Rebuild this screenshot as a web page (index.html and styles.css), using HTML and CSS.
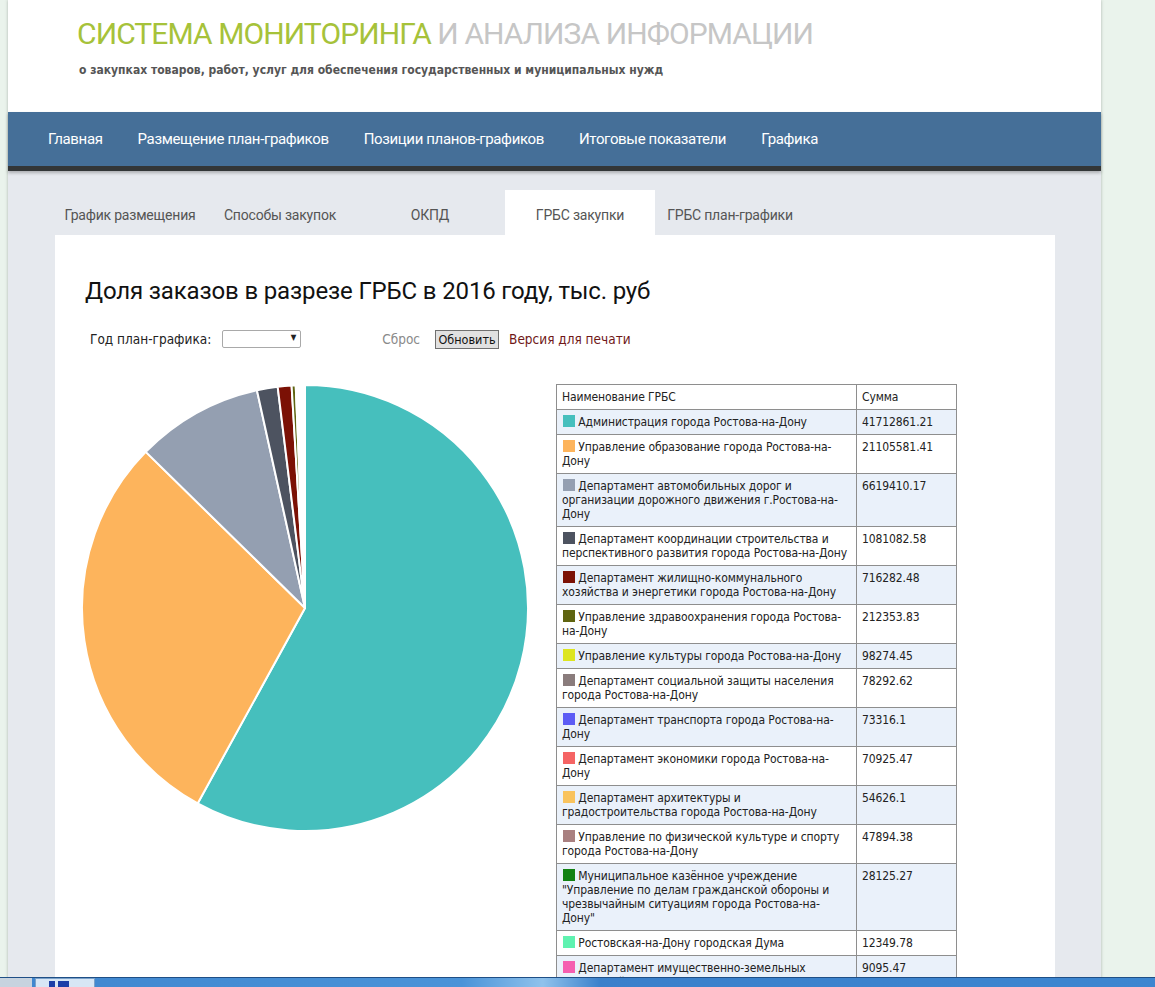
FILE: index.html
```html
<!DOCTYPE html>
<html lang="ru">
<head>
<meta charset="utf-8">
<title>Система мониторинга и анализа информации</title>
<link rel="stylesheet" href="styles.css">
</head>
<body>
<div class="page">
  <header class="site-header">
    <h1 class="brand"><span class="brand-accent">СИСТЕМА МОНИТОРИНГА</span> И АНАЛИЗА ИНФОРМАЦИИ</h1>
    <p class="brand-sub">о закупках товаров, работ, услуг для обеспечения государственных и муниципальных нужд</p>
  </header>
  <nav class="main-nav">
    <a href="#">Главная</a>
    <a href="#">Размещение план-графиков</a>
    <a href="#">Позиции планов-графиков</a>
    <a href="#">Итоговые показатели</a>
    <a href="#">Графика</a>
  </nav>
  <section class="content">
    <ul class="tabs">
      <li>График размещения</li>
      <li>Способы закупок</li>
      <li>ОКПД</li>
      <li class="active">ГРБС закупки</li>
      <li>ГРБС план-графики</li>
    </ul>
    <div class="panel">
      <h2 class="panel-title">Доля заказов в разрезе ГРБС в 2016 году, тыс. руб</h2>
      <div class="filters">
        <span class="filter-label">Год план-графика:</span>
        <span class="select"><span class="select-arrow">▼</span></span>
        <a class="reset" href="#">Сброс</a>
        <button class="btn" type="button">Обновить</button>
        <a class="print" href="#">Версия для печати</a>
      </div>
      <div class="chart-row">
        <svg class="pie" width="448" height="448" viewBox="0 0 448 448">
          <g stroke="#fff" stroke-width="2" stroke-linejoin="round">
            <path fill="#46bfbd" d="M224 224 L224 1 A223 223 0 1 1 116.65 419.46 Z"/>
            <path fill="#fdb45c" d="M224 224 L116.65 419.46 A223 223 0 0 1 64.75 67.9 Z"/>
            <path fill="#949fb1" d="M224 224 L64.75 67.9 A223 223 0 0 1 175.92 6.24 Z"/>
            <path fill="#4d5360" d="M224 224 L175.92 6.24 A223 223 0 0 1 196.66 2.67 Z"/>
            <path fill="#7b1105" d="M224 224 L196.66 2.67 A223 223 0 0 1 210.58 1.4 Z"/>
            <path fill="#5f6410" d="M224 224 L210.58 1.4 A223 223 0 0 1 214.7 1.19 Z"/>
            <path fill="#dde51f" d="M224 224 L214.7 1.19 A223 223 0 0 1 216.61 1.12 Z"/>
            <path fill="#8a7c7c" d="M224 224 L216.61 1.12 A223 223 0 0 1 218.12 1.08 Z"/>
            <path fill="#5c5cf5" d="M224 224 L218.12 1.08 A223 223 0 0 1 219.56 1.04 Z"/>
            <path fill="#f56464" d="M224 224 L219.56 1.04 A223 223 0 0 1 220.93 1.02 Z"/>
            <path fill="#f9c35d" d="M224 224 L220.93 1.02 A223 223 0 0 1 222.02 1.01 Z"/>
            <path fill="#a98080" d="M224 224 L222.02 1.01 A223 223 0 0 1 222.95 1 Z"/>
            <path fill="#128212" d="M224 224 L222.95 1 A223 223 0 0 1 223.49 1 Z"/>
            <path fill="#5ff2b0" d="M224 224 L223.49 1 A223 223 0 0 1 223.73 1 Z"/>
            <path fill="#f55eb0" d="M224 224 L223.73 1 A223 223 0 0 1 224 1 Z"/>
          </g>
        </svg>
        <table class="grbs">
          <thead>
            <tr><th class="col-name">Наименование ГРБС</th><th class="col-sum">Сумма</th></tr>
          </thead>
          <tbody>
            <tr><td><span class="sw c1"></span> Администрация города Ростова-на-Дону</td><td>41712861.21</td></tr>
            <tr><td><span class="sw c2"></span> Управление образование города Ростова-на-Дону</td><td>21105581.41</td></tr>
            <tr><td><span class="sw c3"></span> Департамент автомобильных дорог и организации дорожного движения г.Ростова-на-Дону</td><td>6619410.17</td></tr>
            <tr><td><span class="sw c4"></span> Департамент координации строительства и перспективного развития города Ростова-на-Дону</td><td>1081082.58</td></tr>
            <tr><td><span class="sw c5"></span> Департамент жилищно-коммунального хозяйства и энергетики города Ростова-на-Дону</td><td>716282.48</td></tr>
            <tr><td><span class="sw c6"></span> Управление здравоохранения города Ростова-на-Дону</td><td>212353.83</td></tr>
            <tr><td><span class="sw c7"></span> Управление культуры города Ростова-на-Дону</td><td>98274.45</td></tr>
            <tr><td><span class="sw c8"></span> Департамент социальной защиты населения города Ростова-на-Дону</td><td>78292.62</td></tr>
            <tr><td><span class="sw c9"></span> Департамент транспорта города Ростова-на-Дону</td><td>73316.1</td></tr>
            <tr><td><span class="sw c10"></span> Департамент экономики города Ростова-на-Дону</td><td>70925.47</td></tr>
            <tr><td><span class="sw c11"></span> Департамент архитектуры и градостроительства города Ростова-на-Дону</td><td>54626.1</td></tr>
            <tr><td><span class="sw c12"></span> Управление по физической культуре и спорту города Ростова-на-Дону</td><td>47894.38</td></tr>
            <tr><td><span class="sw c13"></span> Муниципальное казённое учреждение "Управление по делам гражданской обороны и чрезвычайным ситуациям города Ростова-на-Дону"</td><td>28125.27</td></tr>
            <tr><td><span class="sw c14"></span> Ростовская-на-Дону городская Дума</td><td>12349.78</td></tr>
            <tr><td><span class="sw c15"></span> Департамент имущественно-земельных отношений города Ростова-на-Дону</td><td>9095.47</td></tr>
          </tbody>
        </table>
      </div>
    </div>
  </section>
</div>
<div class="taskbar">
  <span class="tb-start"></span>
  <span class="tb-btn"><span class="tb-icon"></span></span>
  <span class="tb-rest"></span>
</div>
</body>
</html>
```

FILE: styles.css
```css
html, body {
  margin: 0;
  padding: 0;
  height: 100%;
  overflow: hidden;
}
body {
  background: #eaf3ec;
  font-family: Roboto, "Liberation Sans", sans-serif;
}
.page {
  width: 1093px;
  margin-left: 8px;
  background: #e6e9ee;
  box-shadow: 0 0 3px rgba(60, 70, 60, 0.35);
  min-height: 1200px;
}
.site-header {
  background: #fff;
  height: 112px;
  box-sizing: border-box;
  padding: 16px 0 0 69px;
}
.brand {
  margin: 0;
  font-weight: 400;
  font-size: 30px;
  line-height: 36px;
  color: #c6c6c6;
  letter-spacing: -0.9px;
}
.brand-accent {
  color: #a6c23a;
}
.brand-sub {
  margin: 11px 0 0 2px;
  font-family: "DejaVu Sans Condensed", "DejaVu Sans", sans-serif;
  font-weight: 700;
  font-size: 12px;
  line-height: 14px;
  color: #555;
}
.main-nav {
  height: 54px;
  background: #456f98;
  border-bottom: 5px solid #333637;
  box-shadow: 0 2px 3px rgba(0, 0, 0, 0.25);
  display: flex;
  gap: 35px;
  padding-left: 40px;
  position: relative;
}
.main-nav a {
  color: #fff;
  text-decoration: none;
  font-size: 15px;
  letter-spacing: -0.35px;
  line-height: 55px;
}
.content {
  padding: 19px 0 0 47px;
}
.tabs {
  list-style: none;
  margin: 0;
  padding: 0;
  display: flex;
  height: 45px;
}
.tabs li {
  width: 150px;
  text-align: center;
  font-size: 14px;
  letter-spacing: -0.2px;
  line-height: 50px;
  color: #555;
}
.tabs li.active {
  background: #fff;
}
.panel {
  width: 1000px;
  background: #fff;
  box-sizing: border-box;
  padding: 41px 0 0 30px;
  min-height: 900px;
}
.panel-title {
  margin: 0;
  font-weight: 400;
  font-size: 24px;
  letter-spacing: -0.15px;
  line-height: 30px;
  color: #111;
}
.filters {
  display: flex;
  align-items: center;
  height: 20px;
  margin: 23px 0 0 5px;
  font-family: "DejaVu Sans Condensed", "DejaVu Sans", sans-serif;
  font-size: 13.5px;
}
.filter-label {
  color: #222;
}
.select {
  width: 79px;
  height: 18px;
  box-sizing: border-box;
  border: 1px solid #a9a9a9;
  border-radius: 2px;
  margin-left: 11px;
  position: relative;
  background: #fff;
}
.select-arrow {
  position: absolute;
  right: 4px;
  top: 2px;
  font-size: 8px;
  color: #222;
}
.reset {
  margin-left: 81px;
  color: #8a8a8a;
  text-decoration: none;
}
.btn {
  margin-left: 15px;
  height: 19px;
  width: 64px;
  padding: 0;
  font-family: "DejaVu Sans Condensed", "DejaVu Sans", sans-serif;
  font-size: 12.5px;
  color: #111;
  background: #e1e1e1;
  border: 1px solid #707070;
  border-radius: 0;
}
.print {
  margin-left: 10px;
  color: #701818;
  text-decoration: none;
}
.chart-row {
  display: flex;
  align-items: flex-start;
  margin-top: 35px;
  margin-left: -4px;
}
.pie {
  display: block;
  flex: none;
}
.grbs {
  margin-left: 27px;
  width: 401px;
  border-collapse: collapse;
  font-family: "DejaVu Sans Condensed", "DejaVu Sans", sans-serif;
  font-size: 12px;
  letter-spacing: -0.1px;
  line-height: 14px;
  color: #222;
}
.grbs th, .grbs td {
  border: 1px solid #8e8e8e;
  padding: 5px;
  text-align: left;
  vertical-align: top;
  font-weight: 400;
}
.col-name { width: 289px; }
.col-sum { width: 89px; }
.grbs tbody tr:nth-child(odd) td {
  background: #eaf1fa;
}
.sw {
  display: inline-block;
  width: 12px;
  height: 12px;
  vertical-align: -1px;
  margin-left: 1px;
}
.c1 { background: #46bfbd; }
.c2 { background: #fdb45c; }
.c3 { background: #949fb1; }
.c4 { background: #4d5360; }
.c5 { background: #7b1105; }
.c6 { background: #5f6410; }
.c7 { background: #dde51f; }
.c8 { background: #8a7c7c; }
.c9 { background: #5c5cf5; }
.c10 { background: #f56464; }
.c11 { background: #f9c35d; }
.c12 { background: #a98080; }
.c13 { background: #128212; }
.c14 { background: #5ff2b0; }
.c15 { background: #f55eb0; }
.taskbar {
  position: fixed;
  left: 0;
  right: 0;
  bottom: 0;
  height: 9px;
  display: flex;
  background: linear-gradient(90deg, #3f86cf 0%, #4a93d8 40%, #8fc2ec 47%, #3a80cb 52%, #3d86d0 100%);
  border-top: 1px solid #1f4f86;
}
.tb-start {
  width: 32px;
  background: #c7d3df;
}
.tb-btn {
  width: 58px;
  margin-left: 3px;
  background: #d7e6f5;
  border: 1px solid #7aa1c9;
  border-bottom: none;
  position: relative;
}
.tb-icon {
  position: absolute;
  left: 13px;
  top: 2px;
  width: 20px;
  height: 7px;
  background: linear-gradient(90deg, #1c3ea8 0 6px, transparent 6px 9px, #1c3ea8 9px 20px);
}
.tb-rest {
  flex: 1;
}
```
